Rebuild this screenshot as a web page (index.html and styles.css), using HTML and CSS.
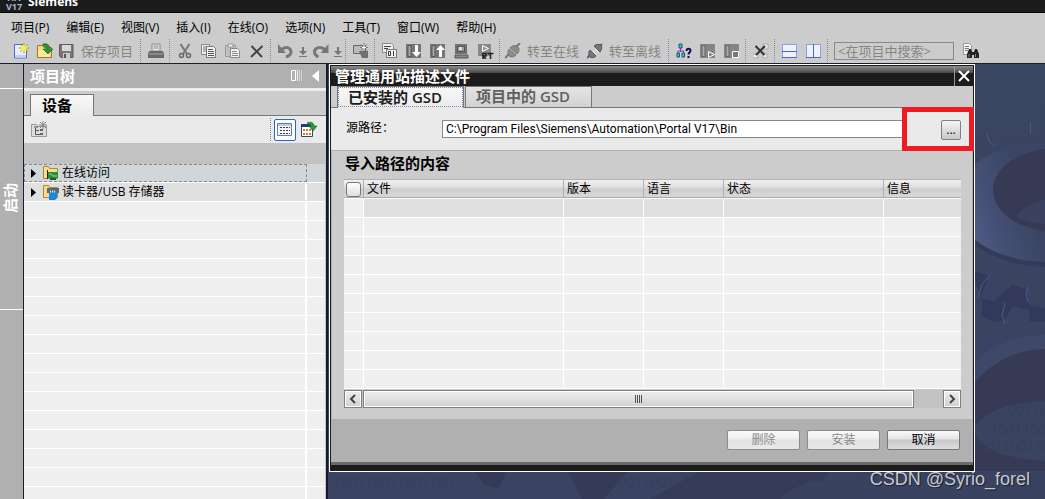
FILE: index.html
```
<!DOCTYPE html>
<html lang="zh-CN">
<head>
  <meta charset="UTF-8" />
  <meta name="viewport" content="width=device-width, initial-scale=1" />
  <title>Siemens</title>
  <link rel="stylesheet" href="styles.css">
</head>
<body>
<header class="titlebar">
  <span class="logo">TIA<br>V17</span>
  <span class="app-name">Siemens</span>
</header>

<nav class="menubar">
  <button>项目(P)</button>
  <button>编辑(E)</button>
  <button>视图(V)</button>
  <button>插入(I)</button>
  <button>在线(O)</button>
  <button>选项(N)</button>
  <button>工具(T)</button>
  <button>窗口(W)</button>
  <button>帮助(H)</button>
</nav>

<div class="toolbar">
  <button class="tool" aria-label="新建项目">
    <svg viewBox="0 0 16 16"><path d="M1.500 1.500h9l3 3v10.500h-12z" fill="#e8edff" stroke="#5068d8"/><path d="M2 12h11v2.500H2z" fill="#c4d0fa"/><path d="M11 0v10M6 5h10M7.500 1.500l7 7M14.500 1.500l-7 7" stroke="#5c7a38"/><path d="M11 1v8M7 5h8M8.500 2.500l5 5M13.500 2.500l-5 5" stroke="#fff03a" stroke-width="1.300"/></svg>
  </button>
  <button class="tool" aria-label="打开项目">
    <svg viewBox="0 0 16 16"><path d="M.5 2.500h5l1.500 2h7.500v10H.5z" fill="#f8d878" stroke="#a87820"/><path d="M1 7h12v7H1z" fill="#fce9a0"/><path d="M6 1c4-1 7 1 7 5h3l-5 5-5-5h3c0-2-1-3-3-3z" fill="#27963a" stroke="#14621f" stroke-width=".6"/></svg>
  </button>
  <button class="tool tool-text">
    <svg viewBox="0 0 16 16"><path d="M.5 1.500h13.500v13H2l-1.500-1.500z" fill="#777" stroke="#5c5c5c"/><path d="M3 2h9v6H3z" fill="#d8d8d8"/><path d="M4 10h7v5H4z" fill="#c8c8c8"/><path d="M5 11h2v4H5z" fill="#555"/></svg>
    <span>保存项目</span>
  </button>
  <span class="sep"></span>
  <button class="tool" aria-label="打印">
    <svg viewBox="0 0 16 16"><path d="M4 1h8v7H4z" fill="#e8e8e8" stroke="#888"/><path d="M5.500 3h5M5.500 5h5" stroke="#888"/><path d="M1 8h14l1 3v4H0v-4z" fill="#6a6a6a"/><path d="M1 11h14" stroke="#a8a8a8"/></svg>
  </button>
  <span class="sep"></span>
  <button class="tool" aria-label="剪切">
    <svg viewBox="0 0 16 16"><path d="M3.500 1l6.500 10M12.500 1L6 11" stroke="#777" stroke-width="2"/><circle cx="4.500" cy="12.500" r="2" fill="none" stroke="#666" stroke-width="1.500"/><circle cx="11.500" cy="12.500" r="2" fill="none" stroke="#666" stroke-width="1.500"/></svg>
  </button>
  <button class="tool" aria-label="复制">
    <svg viewBox="0 0 16 16"><path d="M.5 1.500h8v10h-8z" fill="#eee" stroke="#888"/><path d="M2 4h4M2 6h4M2 8h4" stroke="#777"/><path d="M5.500 3.500h7l2 2v9h-9z" fill="#f4f4f4" stroke="#777"/><path d="M7 6.500h5M7 8.500h6M7 10.500h6M7 12.500h6" stroke="#555"/></svg>
  </button>
  <button class="tool" aria-label="粘贴">
    <svg viewBox="0 0 16 16"><path d="M.5 2.500h10v11H.5z" fill="#c0c0c0" stroke="#999"/><path d="M3 1h5v3H3z" fill="#eee" stroke="#999"/><path d="M5.500 5.500h7l2 2v7h-9z" fill="#f2f2f2" stroke="#888"/><path d="M7 8.500h5M7 10.500h6M7 12.500h6" stroke="#888"/></svg>
  </button>
  <button class="tool" aria-label="删除">
    <svg viewBox="0 0 16 16"><path d="M2.500 3l10.500 11M13.500 3L2 14" stroke="#444" stroke-width="2"/></svg>
  </button>
  <span class="sep"></span>
  <button class="tool" aria-label="撤消">
    <svg viewBox="0 0 16 16"><path d="M3 7c4-4 10-3 10 2 0 2-2 4-5 5" fill="none" stroke="#777" stroke-width="3"/><path d="M0 1v9h8z" fill="#777"/></svg>
  </button>
  <button class="tool tool-drop" aria-label="撤消列表">
    <svg viewBox="0 0 9 16"><path d="M3 4h2v4h3L4 12 0 8h3zM0 13h8v1H0z" fill="#777"/></svg>
  </button>
  <button class="tool" aria-label="重做">
    <svg viewBox="0 0 16 16"><path d="M12.500 7c-4-4-11-3-11 2 0 2 2 4 4 5" fill="none" stroke="#777" stroke-width="3"/><path d="M15.500 1v9h-8z" fill="#777"/></svg>
  </button>
  <button class="tool tool-drop" aria-label="重做列表">
    <svg viewBox="0 0 9 16"><path d="M3 4h2v4h3L4 12 0 8h3zM0 13h8v1H0z" fill="#777"/></svg>
  </button>
  <span class="sep"></span>
  <button class="tool" aria-label="新建对象">
    <svg viewBox="0 0 16 16"><path d="M.5 2.500h12v8H.5z" fill="#bbb" stroke="#666"/><path d="M6 8h9v7H9z" fill="#707070"/><path d="M11 0v9M7 4.500h8M8 1.500l6 6M14 1.500l-6 6" stroke="#777"/><path d="M11 2v5M9 4.500h4" stroke="#fff"/></svg>
  </button>
  <span class="sep"></span>
  <button class="tool" aria-label="编译">
    <svg viewBox="0 0 16 16"><path d="M.5.5h9l2 2v7H.5z" fill="#eee" stroke="#888"/><path d="M2 3.500h7M2 5.500h4" stroke="#444"/><path d="M4.500 6.500h10v8h-10z" fill="#f4f4f4" stroke="#777"/><path d="M6.500 8.500h2v4h-2zM11.500 8v5" fill="none" stroke="#333"/></svg>
  </button>
  <button class="tool" aria-label="下载">
    <svg viewBox="0 0 16 16"><path d="M0 1h15v14H0z" fill="#777"/><path d="M2 2.500h3v11H2z" fill="#aaa" stroke="#555"/><path d="M9 2h3v7h3l-4.500 5L6 9h3z" fill="#fff"/></svg>
  </button>
  <button class="tool" aria-label="上传">
    <svg viewBox="0 0 16 16"><path d="M0 1h15v14H0z" fill="#777"/><path d="M2 2.500h3v11H2z" fill="#aaa" stroke="#555"/><path d="M9 14h3V7h3l-4.500-5L6 7h3z" fill="#fff"/></svg>
  </button>
  <button class="tool" aria-label="仿真">
    <svg viewBox="0 0 16 16"><path d="M1 1h12v10H1z" fill="#707070"/><path d="M3.500 3.500h7v5h-7z" fill="#999" stroke="#555"/><path d="M5 4h3v3H5z" fill="#ddd"/><path d="M1 12h13v3H1z" fill="#888" stroke="#555"/></svg>
  </button>
  <button class="tool" aria-label="启动运行系统">
    <svg viewBox="0 0 16 16"><path d="M0 1h13v12H0z" fill="#888"/><path d="M4.500 2.500v6l6-3z" fill="#999" stroke="#fff"/><path d="M5 16v-5.500h3v2.500H5l3 3M9.500 10.500h6M12.500 10.500V16" fill="none" stroke="#222" stroke-width="1.500"/></svg>
  </button>
  <span class="sep"></span>
  <button class="tool tool-text">
    <svg viewBox="0 0 16 16"><path d="M0 15l4-4M11 4l4-4" stroke="#777" stroke-width="2"/><path d="M4 6l7 6c-3 3-6 2-7 1s-2-4 0-7zM5 5c2-3 6-3 8-1s1 5-1 7z" fill="#8c8c8c" stroke="#666" stroke-width=".7"/></svg>
    <span>转至在线</span>
  </button>
  <button class="tool tool-text">
    <svg viewBox="0 0 16 16"><path d="M0 15l3-3M12 4l3-3" stroke="#666" stroke-width="2"/><path d="M3 7l6 6c-2 2-5 2-6 1s-2-5 0-7zM7 3c2-2 6-2 7-1s1 5-1 7z" fill="#777" stroke="#555"/><path d="M6 8l3 3M8 6l3 3" stroke="#eee"/></svg>
    <span>转至离线</span>
  </button>
  <span class="sep"></span>
  <button class="tool" aria-label="可访问的设备">
    <svg viewBox="0 0 16 16"><path d="M4.500 5v4M2 10V8h5.500v2" fill="none" stroke="#a020c8"/><path d="M3 1h3v4H3zM1 10h2.500v4H1zM6 10h2.500v4H6z" fill="#20d0e0" stroke="#24506c"/><path d="M10.500 8c0-3 4-3 4-.5 0 2-2 2-2 4M12.500 13v2" fill="none" stroke="#101058" stroke-width="2"/></svg>
  </button>
  <button class="tool" aria-label="启动 CPU">
    <svg viewBox="0 0 16 16"><path d="M0 1h15v14H0z" fill="#858585"/><path d="M2 2.500h3v11H2z" fill="#aaa" stroke="#666"/><path d="M8.500 8.500v6l6-3z" fill="#888" stroke="#fff"/></svg>
  </button>
  <button class="tool" aria-label="停止 CPU">
    <svg viewBox="0 0 16 16"><path d="M0 1h15v14H0z" fill="#858585"/><path d="M2 2.500h3v11H2z" fill="#aaa" stroke="#666"/><path d="M8.500 8.500h6v6h-6z" fill="#777" stroke="#fff"/></svg>
  </button>
  <span class="sep"></span>
  <button class="tool" aria-label="交叉引用">
    <svg viewBox="0 0 16 16"><path d="M10 1h5v5h-5zM0 11h5v4H0zM10 11h4v4h-4z" fill="#eee" stroke="#aaa"/><path d="M2.500 3l9 9M12 3l-9 9" stroke="#333" stroke-width="2"/></svg>
  </button>
  <span class="sep"></span>
  <button class="tool" aria-label="水平拆分">
    <svg viewBox="0 0 16 16"><path d="M.5 1.500h14v13H.5z" fill="#eef2ff" stroke="#8c9ce8"/><path d="M0 8.500h15M0 14.500h15" stroke="#4a64d0"/></svg>
  </button>
  <button class="tool" aria-label="垂直拆分">
    <svg viewBox="0 0 16 16"><path d="M.5 1.500h14v13H.5z" fill="#eef2ff" stroke="#8c9ce8"/><path d="M7.500 1v14M0 14.500h15" stroke="#4a64d0"/></svg>
  </button>
  <span class="sep"></span>
  <input class="search" type="text" placeholder="&lt;在项目中搜索&gt;" aria-label="在项目中搜索">
  <button class="tool" aria-label="搜索">
    <svg viewBox="0 0 16 16"><path d="M.5.5h6l2 2v9h-8z" fill="#f4f4f4" stroke="#999"/><path d="M2 3.500h4M2 5.500h4M2 7.500h3" stroke="#777"/><path d="M6 6h2l1 3h2l1-3h2l2 5v4h-5v-3H9v3H4v-4z" fill="#222"/><path d="M6 11v3M12.500 11v3" stroke="#888"/></svg>
  </button>
</div>

<main class="workspace">
  <aside class="rail">
    <div class="rail-top"></div>
    <button class="rail-tab"><span>启动</span></button>
  </aside>

  <section class="tree" aria-label="项目树">
    <div class="tree-head">
      <h2>项目树</h2>
      <button class="plain" aria-label="自动折叠"><svg width="12" height="12" viewBox="0 0 12 12"><path d="M.5.500h4v10h-4z" fill="none" stroke="#fff"/><path d="M6.500 0v11" stroke="#eee"/><path d="M8.500 0v11M10.500 0v11" stroke="#d4d4d4"/></svg></button>
      <button class="plain" aria-label="折叠"><svg width="7" height="12" viewBox="0 0 7 12"><path d="M7 0v12L0 6z" fill="#fff"/></svg></button>
    </div>
    <div class="tree-tabs"><button class="tree-tab">设备</button></div>
    <div class="tree-tools">
      <button class="plain" aria-label="添加设备"><svg width="17" height="17" viewBox="0 0 17 17"><path d="M.5 3.500h5l1 2h9v10H.5z" fill="#ddd" stroke="#999"/><path d="M4.500 7v6.500H9M4.500 9.500H8M3 6h4" fill="none" stroke="#555"/><path d="M9 8h3v2H9zM9 12h3v2H9z" fill="#666"/><path d="M12 0v8M8 4h8M9 1l6 6M15 1L9 7" stroke="#888"/></svg></button>
      <span class="sep"></span>
      <button class="view-btn" aria-label="详细视图"><svg width="16" height="16" viewBox="0 0 16 16"><path d="M.5 1.500h14v12H.5z" fill="#f4f6ff" stroke="#6478b4"/><path d="M1 3h13" stroke="#8c9ccc"/><path d="M3 5.500h10M3 8.500h10M3 11.500h10" stroke="#333c60" stroke-dasharray="2 1"/></svg></button>
      <button class="plain" aria-label="导出"><svg width="17" height="17" viewBox="0 0 17 17"><path d="M.5 3.500h11v12H.5z" fill="#fff" stroke="#28487c"/><path d="M0 3h12v3H0z" fill="#1e3e78"/><path d="M2 9h9M2 13h9" stroke="#d87820" stroke-width="2" stroke-dasharray="2 1"/><path d="M6 2c4-2 7 0 7 3h3l-4 5-4-5h2c0-1-2-2-4-3z" fill="#279a3a" stroke="#166022" stroke-width=".6"/></svg></button>
    </div>
    <ul class="tree-list">
      <li class="selected">
        <a href="#online">
          <svg class="caret" viewBox="0 0 5 9"><path d="M0 0v9l5-4.500z"/></svg>
          <svg class="folder" viewBox="0 0 16 16"><path d="M.5 1.500h5l1 2h8v10H.5z" fill="#f8dc88" stroke="#b08830"/><path d="M4.500 5v9" stroke="#222"/><path d="M5 7h10v6H5z" fill="#2c8c44"/><path d="M7 13h6v2H7z" fill="#1c6030"/><path d="M6 9h2l2 2h4" fill="none" stroke="#90d8a0"/></svg>
          <span>在线访问</span>
        </a>
      </li>
      <li>
        <a href="#reader">
          <svg class="caret" viewBox="0 0 5 9"><path d="M0 0v9l5-4.500z"/></svg>
          <svg class="folder" viewBox="0 0 16 16"><path d="M.5 1.500h5l1 2h8v10H.5z" fill="#f8dc88" stroke="#b08830"/><path d="M4 4h12v5H4z" fill="#5c6474"/><path d="M6 7h8v7l-2 2H6z" fill="#1888e0"/><path d="M7 7.500h6" stroke="#fff0a0" stroke-dasharray="1 1" stroke-width="2"/></svg>
          <span>读卡器/USB 存储器</span>
        </a>
      </li>
    </ul>
  </section>

  <section class="canvas">
    <svg class="gears" viewBox="326 64 719 435" preserveAspectRatio="xMaxYMin slice" aria-hidden="true">
      <defs>
        <linearGradient id="rim" x1="0" x2="1" y1=".6" y2=".4">
          <stop offset="0" stop-color="#56628f"/>
          <stop offset=".2" stop-color="#444f74"/>
          <stop offset=".4" stop-color="#3b4563"/>
        </linearGradient>
        <linearGradient id="sky" x1="0" x2="0" y1="0" y2="1">
          <stop offset="0" stop-color="#3a4560"/>
          <stop offset="1" stop-color="#3a4362"/>
        </linearGradient>
      </defs>
      <path d="M326 64h719v435H326z" fill="url(#sky)"/>
      <path d="M970 270l19 6-9 22 14 3 18-16 14 4 3 16 16 3v14h-15l-1-12-16-4-8 14-10 2-13-5v-18z" fill="#33395a"/>
      <ellipse cx="1048" cy="206" rx="94" ry="61" fill="#343b59"/>
      <ellipse cx="1048" cy="202" rx="94" ry="60" fill="url(#rim)"/>
      <ellipse cx="1058" cy="190" rx="65" ry="42" fill="#363a54"/>
      <path d="M1016 216c9-10 20-14 29-16v24c-11 0-20-3-29-8z" fill="#3a4260"/>
      <path d="M987 133l2 8 6 5M1031 122l-1 6 1 6M989 276l-7 8-4 14M1028 287l-2 7 2 8M1005 303l-3 12 3 9" fill="none" stroke="#505c88" stroke-width="1"/>
      <ellipse cx="1042" cy="433" rx="98" ry="98" fill="#3e4869"/>
      <ellipse cx="1045" cy="453" rx="96" ry="104" fill="#363a54"/>
      <ellipse cx="1052" cy="431" rx="77" ry="30" fill="#3a4461"/>
      <path d="M700 471h130l-24 28H650z" fill="#363c58"/>
      <path d="M474 471h32l-7 18-15-5zM568 471h60l-24 28h-22z" fill="#353a56"/>
      <path d="M780 499c20-16 30-20 62-18l23-10h180v28z" fill="#39425f"/>
      <g class="bits">
        <text x="333" y="487">100110011001100</text>
        <text x="618" y="487">001100110</text>
        <text x="1008" y="416">00110</text>
        <text x="990" y="434">1001100</text>
        <text x="978" y="452">001100110</text>
      </g>
    </svg>

    <div class="dialog" role="dialog" aria-labelledby="dialog-title">
      <div class="dialog-head">
        <h2 id="dialog-title">管理通用站描述文件</h2>
        <button class="close" aria-label="关闭"><svg width="12" height="12" viewBox="0 0 12 12"><path d="M1 1l10 10M11 1L1 11" stroke="#fff" stroke-width="2"/></svg></button>
      </div>
      <div class="tabs">
        <button class="tab active">已安装的 GSD</button>
        <button class="tab">项目中的 GSD</button>
      </div>
      <div class="source">
        <label for="path">源路径：</label>
        <input id="path" type="text" value="C:\Program Files\Siemens\Automation\Portal V17\Bin">
        <button class="browse" aria-label="浏览">...</button>
        <span class="highlight"></span>
      </div>
      <div class="content">
        <h3>导入路径的内容</h3>
        <table>
          <colgroup><col class="c-check"><col class="c-file"><col class="c-short"><col class="c-short"><col class="c-state"><col></colgroup>
          <thead>
            <tr>
              <th><input type="checkbox" aria-label="全选"></th>
              <th>文件</th>
              <th>版本</th>
              <th>语言</th>
              <th>状态</th>
              <th>信息</th>
            </tr>
          </thead>
          <tbody>
            <tr><td></td><td></td><td></td><td></td><td></td><td></td></tr>
            <tr><td></td><td></td><td></td><td></td><td></td><td></td></tr>
            <tr><td></td><td></td><td></td><td></td><td></td><td></td></tr>
            <tr><td></td><td></td><td></td><td></td><td></td><td></td></tr>
            <tr><td></td><td></td><td></td><td></td><td></td><td></td></tr>
            <tr><td></td><td></td><td></td><td></td><td></td><td></td></tr>
            <tr><td></td><td></td><td></td><td></td><td></td><td></td></tr>
            <tr><td></td><td></td><td></td><td></td><td></td><td></td></tr>
            <tr><td></td><td></td><td></td><td></td><td></td><td></td></tr>
            <tr><td></td><td></td><td></td><td></td><td></td><td></td></tr>
          </tbody>
        </table>
        <div class="scrollbar">
          <button aria-label="向左滚动"><svg width="8" height="10" viewBox="0 0 8 10"><path d="M6 1L2 5l4 4" fill="none" stroke="#444" stroke-width="2"/></svg></button>
          <div class="thumb"><svg width="8" height="8" viewBox="0 0 8 8"><path d="M.5 0v8M2.500 0v8M4.500 0v8M6.500 0v8" stroke="#555"/></svg></div>
          <button aria-label="向右滚动"><svg width="8" height="10" viewBox="0 0 8 10"><path d="M2 1l4 4-4 4" fill="none" stroke="#444" stroke-width="2"/></svg></button>
        </div>
      </div>
      <div class="actions">
        <button class="btn" disabled>删除</button>
        <button class="btn" disabled>安装</button>
        <button class="btn">取消</button>
      </div>
    </div>

    <span class="watermark">CSDN @Syrio_forel</span>
  </section>
</main>
</body>
</html>
```
FILE: styles.css
```
* {
  box-sizing: border-box;
}
body {
  margin: 0;
  min-height: 100vh;
  display: flex;
  flex-direction: column;
  font-family: 'Open Sans', 'Noto Sans CJK SC', sans-serif;
  font-size: 12px;
  line-height: 16px;
  color: #000;
  background: #ccc;
}
button, input {
  font: inherit;
  color: inherit;
  margin: 0;
}
button {
  padding: 0;
  border: none;
  background: none;
}
h2, h3 {
  margin: 0;
  font-size: 15px;
  line-height: 20px;
}
svg {
  display: block;
  flex: none;
}

/* title bar */
.titlebar {
  height: 13px;
  padding: 0 6px 1px;
  display: flex;
  align-items: flex-end;
  gap: 5px;
  overflow: hidden;
  background: #1c1c1c;
  border-bottom: 1px solid #000;
  color: #fff;
  font-weight: 700;
}
.logo {
  width: 17px;
  font-size: 9px;
  line-height: 9px;
  color: #a4b2d4;
}
.app-name {
  line-height: 18px;
}

/* menu and toolbar */
.menubar {
  display: flex;
  gap: 17px;
  padding: 7px 11px 2px;
}
.menubar button {
  line-height: 16px;
}
.toolbar {
  display: flex;
  align-items: center;
  height: 26px;
  padding: 0 9px;
  border-bottom: 1px solid #1a1e30;
}
.tool {
  flex: none;
  width: 24px;
  height: 24px;
  display: flex;
  align-items: center;
  justify-content: center;
}
.tool svg {
  width: 16px;
  height: 16px;
}
.tool-text {
  width: auto;
  gap: 6px;
  padding: 0 6px 0 2px;
  font-size: 13px;
  color: #858585;
}
.tool-drop {
  width: 11px;
}
.tool-drop svg {
  width: 9px;
}
.sep {
  flex: none;
  height: 23px;
  margin: 0 3px 0 1px;
  border-left: 1px dotted #888;
}
.search {
  width: 120px;
  height: 18px;
  margin: 0 5px 0 3px;
  padding: 0 3px;
  border: 1px solid #888;
  background: #ccc;
  font-size: 13px;
}
.search::placeholder {
  color: #858585;
}

.workspace {
  flex: 1;
  display: flex;
}

/* left rail */
.rail {
  flex: none;
  width: 24px;
  display: flex;
  flex-direction: column;
  background: #b0b0b0;
  border-right: 1px solid #1a1e30;
}
.rail-top {
  height: 24px;
}
.rail-tab {
  height: 222px;
  padding-right: 3px;
  border-top: 1px solid #fff;
  border-bottom: 1px solid #fff;
  color: #fff;
  font-size: 15px;
  font-weight: 700;
}
.rail-tab span {
  writing-mode: vertical-rl;
  text-orientation: sideways;
  transform: rotate(180deg);
}

/* project tree */
.tree {
  flex: none;
  width: 302px;
  display: flex;
  flex-direction: column;
  background: #c2c2c2;
}
.tree-head {
  display: flex;
  align-items: center;
  gap: 9px;
  height: 27px;
  padding: 0 7px 0 6px;
  background: #b0b0b0;
  border-bottom: 3px solid #eee;
  color: #fff;
}
.tree-head h2 {
  flex: 1;
}
.tree-tabs {
  display: flex;
  padding: 3px 6px 0;
  background: #ccc;
  border-bottom: 1px solid #777;
}
.tree-tab {
  width: 64px;
  height: 22px;
  margin-bottom: -1px;
  padding: 0 10px 2px 0;
  border: 1px solid #777;
  border-bottom: none;
  background: linear-gradient(#f8f8f8, #eaeaea);
  font-size: 15px;
  font-weight: 700;
}
.tree-tools {
  display: flex;
  align-items: center;
  height: 27px;
  padding: 0 8px 0 7px;
  background: #eaeaea;
}
.tree-tools .sep {
  margin-left: auto;
}
.view-btn {
  width: 22px;
  height: 22px;
  margin-right: 5px;
  display: flex;
  align-items: center;
  justify-content: center;
  border: 1px solid #2c62cc;
  border-radius: 2px;
  background: #fff;
}
.tree-list {
  flex: 1;
  margin: 21px 1px 0 0;
  padding: 0;
  list-style: none;
  background:
    linear-gradient(#fff, #fff) right 18px top / 2px 100% no-repeat,
    repeating-linear-gradient(#efefef 0 18px, #fff 18px 19px);
}
.tree-list li {
  height: 19px;
  padding-right: 18px;
  border-bottom: 1px solid #fff;
  background: #e0e0e0;
}
.tree-list .selected {
  background: #d0d6da;
}
.tree-list a {
  display: flex;
  align-items: center;
  height: 18px;
  padding-left: 6px;
  border: 1px solid transparent;
  border-right: 2px solid #fff;
  color: #000;
  text-decoration: none;
}
.tree-list .selected a {
  border: 1px dashed #888;
}
.caret {
  width: 5px;
  height: 9px;
  margin-right: 7px;
}
.folder {
  width: 16px;
  height: 16px;
  margin-right: 3px;
}

/* work area */
.canvas {
  position: relative;
  flex: 1;
  min-width: 0;
  padding: 0 70px 27px 1px;
  border-left: 2px solid #161b2c;
  background: #3a4462;
}
.gears {
  position: absolute;
  top: 0;
  left: 0;
  width: 100%;
  height: 100%;
}
.bits {
  font-size: 14px;
  fill: #363f5b;
}
.watermark {
  position: absolute;
  right: 15px;
  bottom: 9px;
  font-family: 'Liberation Sans', sans-serif;
  font-size: 18px;
  line-height: 22px;
  color: #c4c7cf;
  text-shadow: 1px 1px 1px #1c2030;
}

/* GSD dialog */
.dialog {
  position: relative;
  padding: 1px;
  border: 1px solid #fff;
  background: #1c1c1c;
}
.dialog-head {
  display: flex;
  height: 20px;
  padding-left: 4px;
  background: linear-gradient(#8c8c8c, #484848 7px, #1c1c1c 7px);
  color: #fff;
}
.dialog-head h2 {
  flex: 1;
}
.close {
  width: 19px;
  display: flex;
  align-items: center;
  justify-content: center;
  border-left: 1px solid #999;
}
.tabs {
  display: flex;
  gap: 1px;
  height: 22px;
  padding-left: 6px;
  background: #ccc;
  border-bottom: 1px solid #777;
}
.tab {
  width: 127px;
  height: 22px;
  padding: 0 0 2px 10px;
  border: 1px solid #777;
  background: linear-gradient(#e4e4e4, #d2d2d2);
  font-size: 15px;
  font-weight: 600;
  text-align: left;
  color: #606060;
}
.tab.active {
  border-bottom: none;
  background: linear-gradient(#f8f8f8, #eaeaea);
  color: #1c1c1c;
  outline: 1px dotted #7c8cae;
  outline-offset: -2px;
}
.source {
  position: relative;
  display: flex;
  align-items: flex-start;
  height: 43px;
  padding: 12px 12px 0 15px;
  background: #eaeaea;
  border-bottom: 1px solid #b0b0b0;
}
.source label {
  width: 96px;
}
.source input {
  flex: 1;
  min-width: 0;
  height: 18px;
  margin-right: 36px;
  padding: 0 3px;
  border: 1px solid #888;
  background: #fff;
  font-family: Roboto, 'Open Sans', sans-serif;
}
.browse {
  width: 20px;
  height: 20px;
  border: 1px solid #808080;
  border-radius: 2px;
  background: linear-gradient(#f4f4f4, #c8c8c8);
}
.highlight {
  position: absolute;
  top: -1px;
  right: -1px;
  width: 72px;
  height: 44px;
  border: 5px solid #ed1c24;
  pointer-events: none;
}
.content {
  padding: 2px 11px 11px 12px;
  background: #ccc;
  border-left: 1px solid #b0b0b0;
  border-right: 1px solid #b0b0b0;
}
.content h3 {
  margin: 0 1px 6px;
}
table {
  width: 100%;
  table-layout: fixed;
  border-collapse: separate;
  border-spacing: 0;
}
.c-check {
  width: 20px;
}
.c-file {
  width: 200px;
}
.c-short {
  width: 80px;
}
.c-state {
  width: 160px;
}
th {
  height: 20px;
  padding: 0 3px;
  border-top: 1px solid #b0b0b0;
  border-right: 1px solid #b0b0b0;
  border-bottom: 1px solid #fff;
  background: linear-gradient(#f0f0f0, #e0e0e0 7px, #cecece 9px, #d8d8d8 17px, #a8a8a8 17px);
  font-weight: 400;
  line-height: 16px;
  text-align: left;
}
th:first-child {
  padding: 0 2px;
}
th input {
  appearance: none;
  display: block;
  width: 15px;
  height: 15px;
  border: 1px solid #777;
  border-radius: 3px;
  background: linear-gradient(#fff, #ddd);
}
td {
  height: 19px;
  padding: 0;
  background: #efefef;
  border-right: 1px solid #fff;
  border-bottom: 1px solid #fff;
}
tbody tr:first-child td:not(:first-child) {
  background: #e0e0e0;
}
th:last-child, td:last-child {
  border-right: none;
}
.scrollbar {
  display: flex;
  gap: 1px;
  height: 18px;
  margin-top: 1px;
  background: #c2c2c2;
}
.scrollbar button, .thumb {
  width: 18px;
  display: flex;
  align-items: center;
  justify-content: center;
  border: 1px solid #808080;
  background: linear-gradient(#eee, #d0d0d0);
  box-shadow: inset 0 0 0 1px #fff;
}
.thumb {
  flex: 1;
  margin-right: 28px;
}
.actions {
  display: flex;
  justify-content: flex-end;
  gap: 7px;
  padding: 11px 13px 12px;
  margin-bottom: 5px;
  background: #b0b0b0;
  border-bottom: 3px solid #6a6a6a;
}
.btn {
  width: 73px;
  height: 20px;
  border: 1px solid #777;
  border-radius: 2px;
  background: linear-gradient(#fafafa, #e4e4e4 8px, #c8c8c8 9px, #dedede);
}
.btn:disabled {
  border-color: #8c8c8c;
  background: linear-gradient(#fafafa, #eee 8px, #e2e2e2 9px, #e8e8e8);
  color: #8c8c8c;
}
```
